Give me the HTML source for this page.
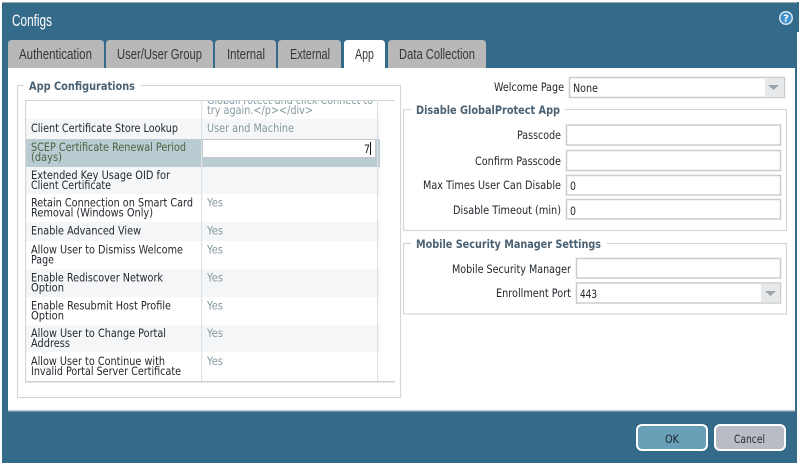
<!DOCTYPE html>
<html><head><meta charset="utf-8"><title>Configs</title>
<style>
html,body{margin:0;padding:0;background:#fff;width:800px;height:465px;overflow:hidden}
svg.root{display:block;filter:blur(.35px)}
text{font-family:"DejaVu Sans","Liberation Sans",sans-serif;font-size:11.5px;fill:#23282d}
.t{font-family:"Liberation Sans",sans-serif;font-size:15px;fill:#33383d}
.v{fill:#84989f}
.l{font-weight:bold;fill:#4a6173;font-size:11.5px}
.i{fill:#fff;stroke:#c9cdcf;stroke-width:1.5}
.g{fill:none;stroke:#d4d7d8;stroke-width:1.2}
</style></head><body>
<svg class="root" width="800" height="465" viewBox="0 0 800 465" xmlns="http://www.w3.org/2000/svg">
<rect width="800" height="465" fill="#fff"/>
<rect x="2" y="2" width="795" height="461" fill="#346a8a"/>
<rect x="2" y="2" width="795" height="1" fill="#9fa9ae"/>
<rect x="797" y="2" width="2" height="30" fill="#346a8a"/>
<text class="t" x="12" y="26" textLength="40" lengthAdjust="spacingAndGlyphs" style="fill:#fff;font-size:17px">Configs</text>
<circle cx="786" cy="18" r="7" fill="#d8e6ee"/>
<circle cx="786" cy="18" r="5.500" fill="#3f8fc8"/>
<text x="786" y="21.500" text-anchor="middle" style="fill:#fff;font-size:10px;font-weight:bold">?</text>

<g fill="#b8b8b8">
<path d="M8 68V44q0-4 4-4h88q4 0 4 4v24z"/>
<path d="M106 68V44q0-4 4-4h99q4 0 4 4v24z"/>
<path d="M215 68V44q0-4 4-4h53q4 0 4 4v24z"/>
<path d="M278 68V44q0-4 4-4h55q4 0 4 4v24z"/>
<path fill="#fff" d="M344 69V44q0-4 4-4h33q4 0 4 4v25z"/>
<path d="M388 68V44q0-4 4-4h90q4 0 4 4v24z"/>
</g>
<text class="t" x="19" y="59" textLength="73" lengthAdjust="spacingAndGlyphs">Authentication</text>
<text class="t" x="117" y="59" textLength="85" lengthAdjust="spacingAndGlyphs">User/User Group</text>
<text class="t" x="227" y="59" textLength="38" lengthAdjust="spacingAndGlyphs">Internal</text>
<text class="t" x="290" y="59" textLength="40" lengthAdjust="spacingAndGlyphs">External</text>
<text class="t" x="355" y="59" textLength="19" lengthAdjust="spacingAndGlyphs">App</text>
<text class="t" x="399" y="59" textLength="76" lengthAdjust="spacingAndGlyphs">Data Collection</text>

<rect x="8" y="68" width="787" height="343" fill="#fff"/>
<rect x="8" y="410" width="787" height="1.500" fill="#bcc3c7"/>

<!-- App Configurations group -->
<rect class="g" x="17.500" y="85.500" width="383" height="312"/>
<rect x="24" y="80" width="117" height="12" fill="#fff"/>
<text class="l" x="29" y="90" textLength="106" lengthAdjust="spacingAndGlyphs">App Configurations</text>

<!-- table rows -->
<rect x="25" y="119" width="355" height="20" fill="#f5f6f7"/>
<rect x="25" y="139" width="355" height="28" fill="#b9ccd1"/>
<rect x="25" y="167" width="355" height="27" fill="#f5f6f7"/>
<rect x="25" y="222" width="355" height="19" fill="#f5f6f7"/>
<rect x="25" y="269" width="355" height="28" fill="#f5f6f7"/>
<rect x="25" y="325" width="355" height="27" fill="#f5f6f7"/>
<rect x="25" y="100" width="370" height="1" fill="#ced3d6"/>
<rect x="25" y="100" width="1.200" height="282" fill="#d2d6d9"/>
<rect x="201" y="100" width="1.200" height="282" fill="#dde1e3"/>
<rect x="377" y="100" width="1.200" height="282" fill="#dde1e3"/>
<rect x="25" y="381" width="370" height="1.500" fill="#cdd2d5"/>

<svg x="202" y="101" width="175" height="30" viewBox="202 101 175 30" overflow="hidden">
<text class="v" x="207" y="104" textLength="166" lengthAdjust="spacingAndGlyphs">GlobalProtect and click Connect to</text>
<text class="v" x="207" y="114" textLength="106" lengthAdjust="spacingAndGlyphs">try again.&lt;/p&gt;&lt;/div&gt;</text>
</svg>

<text x="31" y="132" textLength="147" lengthAdjust="spacingAndGlyphs">Client Certificate Store Lookup</text>
<text class="v" x="207" y="132" textLength="87" lengthAdjust="spacingAndGlyphs">User and Machine</text>
<text x="31" y="151" textLength="155" lengthAdjust="spacingAndGlyphs" style="fill:#4d6444">SCEP Certificate Renewal Period</text>
<text x="31" y="161" textLength="31" lengthAdjust="spacingAndGlyphs" style="fill:#4d6444">(days)</text>
<rect x="202.500" y="139.500" width="173" height="18" fill="#fff" stroke="#c3c9cb"/>
<text x="364" y="153" textLength="6" lengthAdjust="spacingAndGlyphs" style="fill:#222">7</text>
<rect x="370" y="142" width="1" height="13" fill="#111"/>

<text x="31" y="179" textLength="139" lengthAdjust="spacingAndGlyphs">Extended Key Usage OID for</text>
<text x="31" y="189" textLength="80" lengthAdjust="spacingAndGlyphs">Client Certificate</text>
<text x="31" y="206.500" textLength="162" lengthAdjust="spacingAndGlyphs">Retain Connection on Smart Card</text>
<text x="31" y="216.500" textLength="122" lengthAdjust="spacingAndGlyphs">Removal (Windows Only)</text>
<text x="31" y="234.500" textLength="110" lengthAdjust="spacingAndGlyphs">Enable Advanced View</text>
<text x="31" y="253.500" textLength="152" lengthAdjust="spacingAndGlyphs">Allow User to Dismiss Welcome</text>
<text x="31" y="263.500" textLength="23" lengthAdjust="spacingAndGlyphs">Page</text>
<text x="31" y="281.500" textLength="132" lengthAdjust="spacingAndGlyphs">Enable Rediscover Network</text>
<text x="31" y="291.500" textLength="33" lengthAdjust="spacingAndGlyphs">Option</text>
<text x="31" y="309.500" textLength="140" lengthAdjust="spacingAndGlyphs">Enable Resubmit Host Profile</text>
<text x="31" y="319.500" textLength="33" lengthAdjust="spacingAndGlyphs">Option</text>
<text x="31" y="337" textLength="135" lengthAdjust="spacingAndGlyphs">Allow User to Change Portal</text>
<text x="31" y="347" textLength="39" lengthAdjust="spacingAndGlyphs">Address</text>
<text x="31" y="365" textLength="134" lengthAdjust="spacingAndGlyphs">Allow User to Continue with</text>
<text x="31" y="375" textLength="150" lengthAdjust="spacingAndGlyphs">Invalid Portal Server Certificate</text>

<text class="v" x="207" y="206.500" textLength="16" lengthAdjust="spacingAndGlyphs">Yes</text>
<text class="v" x="207" y="234.500" textLength="16" lengthAdjust="spacingAndGlyphs">Yes</text>
<text class="v" x="207" y="253.500" textLength="16" lengthAdjust="spacingAndGlyphs">Yes</text>
<text class="v" x="207" y="281.500" textLength="16" lengthAdjust="spacingAndGlyphs">Yes</text>
<text class="v" x="207" y="309.500" textLength="16" lengthAdjust="spacingAndGlyphs">Yes</text>
<text class="v" x="207" y="337" textLength="16" lengthAdjust="spacingAndGlyphs">Yes</text>
<text class="v" x="207" y="365" textLength="16" lengthAdjust="spacingAndGlyphs">Yes</text>

<!-- Welcome page -->
<text x="494" y="91" textLength="70" lengthAdjust="spacingAndGlyphs">Welcome Page</text>
<rect class="i" x="569.500" y="77.500" width="215" height="20"/>
<rect x="765" y="78" width="19" height="19" fill="#e6e8e9"/>
<path d="M768 85h11l-5.500 5z" fill="#9aa5ad"/>
<text x="573" y="92" textLength="25" lengthAdjust="spacingAndGlyphs">None</text>

<!-- Disable group -->
<rect class="g" x="403.500" y="109.500" width="383" height="121"/>
<rect x="411" y="104" width="154" height="12" fill="#fff"/>
<text class="l" x="416" y="114" textLength="144" lengthAdjust="spacingAndGlyphs">Disable GlobalProtect App</text>
<text x="517" y="139" textLength="44" lengthAdjust="spacingAndGlyphs">Passcode</text>
<rect class="i" x="566.500" y="125" width="214" height="20"/>
<text x="475" y="165" textLength="86" lengthAdjust="spacingAndGlyphs">Confirm Passcode</text>
<rect class="i" x="566.500" y="150.500" width="214" height="20"/>
<text x="423" y="189" textLength="138" lengthAdjust="spacingAndGlyphs">Max Times User Can Disable</text>
<rect class="i" x="566.500" y="175.500" width="214" height="19.500"/>
<text x="570" y="190" textLength="6" lengthAdjust="spacingAndGlyphs">0</text>
<text x="453" y="214" textLength="108" lengthAdjust="spacingAndGlyphs">Disable Timeout (min)</text>
<rect class="i" x="566.500" y="199.500" width="214" height="19.500"/>
<text x="570" y="215" textLength="6" lengthAdjust="spacingAndGlyphs">0</text>

<!-- Mobile group -->
<rect class="g" x="403.500" y="243.500" width="383" height="70.500"/>
<rect x="411" y="238" width="196" height="12" fill="#fff"/>
<text class="l" x="416" y="248" textLength="185" lengthAdjust="spacingAndGlyphs">Mobile Security Manager Settings</text>
<text x="452" y="273" textLength="119" lengthAdjust="spacingAndGlyphs">Mobile Security Manager</text>
<rect class="i" x="576.500" y="258.500" width="204" height="19.500"/>
<text x="496" y="297" textLength="75" lengthAdjust="spacingAndGlyphs">Enrollment Port</text>
<rect class="i" x="576.500" y="283" width="204" height="20"/>
<rect x="761" y="283.500" width="19" height="19" fill="#e6e8e9"/>
<path d="M765 291h11l-5.500 5z" fill="#9aa5ad"/>
<text x="580" y="298" textLength="17" lengthAdjust="spacingAndGlyphs">443</text>

<!-- Buttons -->
<rect x="637" y="425" width="70" height="25" rx="5" fill="#6a9fb8" stroke="#fff" stroke-width="2"/>
<text x="665" y="443" textLength="14" lengthAdjust="spacingAndGlyphs" style="fill:#1d2a33">OK</text>
<rect x="715" y="425" width="70" height="25" rx="5" fill="#b9bcc5" stroke="#fff" stroke-width="2"/>
<text x="734" y="443" textLength="31" lengthAdjust="spacingAndGlyphs" style="fill:#1d2a33">Cancel</text>
</svg>
</body></html>
